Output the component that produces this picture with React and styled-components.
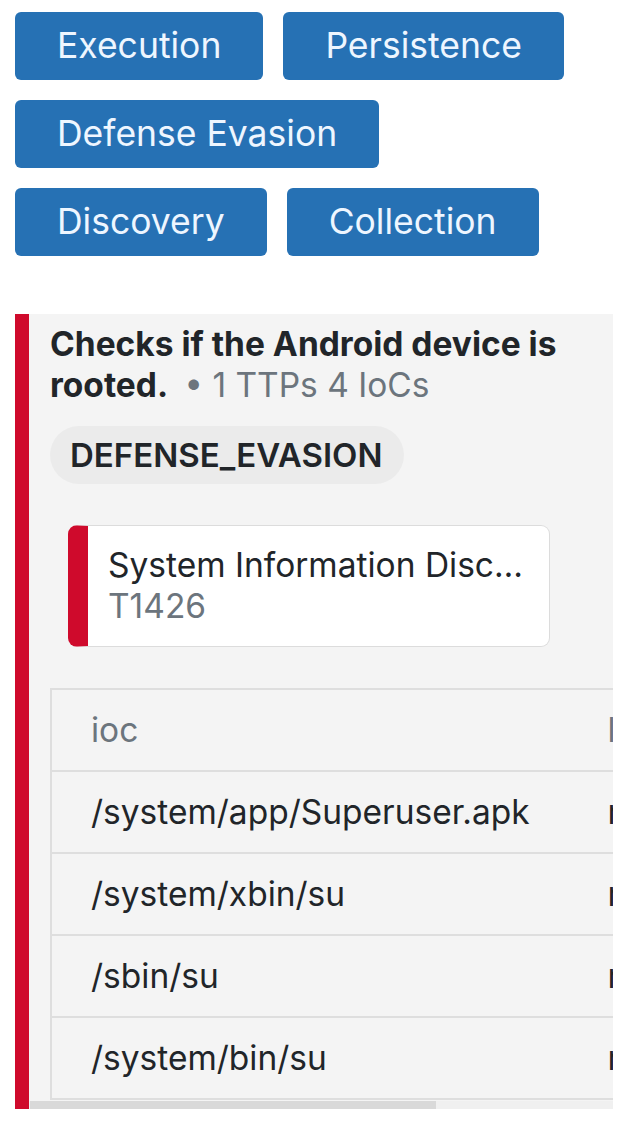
import React from 'react';
import styled, { createGlobalStyle } from 'styled-components';

const GlobalStyle = createGlobalStyle`
  body {
    margin: 0;
    background: #ffffff;
    font-family: Inter, "Noto Sans", "Liberation Sans", sans-serif;
    color: #212529;
  }
`;

const TacticBar = styled.div`
  display: flex;
  flex-wrap: wrap;
  gap: 20px;
  padding: 12px 15px 0;
`;

const TacticButton = styled.button`
  font-family: inherit;
  font-size: 35.5px;
  line-height: 44px;
  padding: 12px 42px;
  border: none;
  border-radius: 6px;
  background: #2671b4;
  color: #eef6ff;
`;

const Card = styled.section`
  display: flex;
  margin: 58px 27px 0 15px;
  border-left: 14px solid #cf0a2c;
  background: #f4f4f4;
`;

const CardBody = styled.div`
  flex: 1;
  min-width: 0;
  display: flex;
  flex-direction: column;
`;

const Viewport = styled.div`
  overflow: hidden;
  padding: 10px 0 1px 21px;
`;

const Title = styled.h3`
  margin: 0;
  padding-right: 21px;
  font-size: 33.5px;
  line-height: 41px;
  font-weight: 700;
  color: #212529;
`;

const Meta = styled.span`
  margin-left: 16px;
  font-weight: 400;
  color: #6c757d;
`;

const Chip = styled.div`
  display: inline-flex;
  align-items: center;
  height: 58px;
  margin-top: 20px;
  padding: 0 21px 0 20px;
  border-radius: 29px;
  background: #ebebeb;
  font-size: 33px;
  font-weight: 600;
  color: #212529;
`;

const TtpCard = styled.div`
  width: 482px;
  box-sizing: border-box;
  margin: 41px 0 0 18px;
  padding: 19px 20px;
  border: 1px solid #dcdcdc;
  border-left: 20px solid #cf0a2c;
  border-radius: 9px;
  background: #ffffff;
  font-size: 33.5px;
  line-height: 41px;
`;

const TtpName = styled.div`
  white-space: nowrap;
  overflow: hidden;
  text-overflow: ellipsis;
  color: #212529;
`;

const TtpId = styled.div`
  color: #6c757d;
`;

const IocTable = styled.table`
  margin-top: 41px;
  min-width: 798px;
  border-collapse: collapse;
  border: 2px solid #dedede;
  white-space: nowrap;
  font-size: 33.5px;
  line-height: 44px;
`;

const Cell = styled.td`
  padding: 18px 39px;
  border-bottom: 2px solid #dedede;
  text-align: left;
  font-weight: 400;
  color: ${(p) => (p.$head ? '#6c757d' : '#212529')};
`;

const ScrollTrack = styled.div`
  height: 8px;
  background: #f0f0f0;
`;

const ScrollThumb = styled.div`
  height: 100%;
  background: #d9d9d9;
  margin-left: 1px;
`;

const tactics = ['Execution', 'Persistence', 'Defense Evasion', 'Discovery', 'Collection'];

const iocs = [
  ['/system/app/Superuser.apk', 'rooting app'],
  ['/system/xbin/su', 'rooting binary'],
  ['/sbin/su', 'rooting binary'],
  ['/system/bin/su', 'rooting binary'],
];

const App = () => {
  const visible = 584;
  const content = 840;

  return (
    <>
      <GlobalStyle />
      <TacticBar>
        {tactics.map((t) => (
          <TacticButton key={t}>{t}</TacticButton>
        ))}
      </TacticBar>

      <Card>
        <CardBody>
          <Viewport>
            <Title>
              Checks if the Android device is rooted.
              <Meta>• 1 TTPs 4 IoCs</Meta>
            </Title>
            <Chip>DEFENSE_EVASION</Chip>
            <TtpCard>
              <TtpName>System Information Discovery</TtpName>
              <TtpId>T1426</TtpId>
            </TtpCard>
            <IocTable>
              <thead>
                <tr>
                  <Cell as="th" $head>ioc</Cell>
                  <Cell as="th" $head>location</Cell>
                </tr>
              </thead>
              <tbody>
                {iocs.map(([path, kind]) => (
                  <tr key={path}>
                    <Cell>{path}</Cell>
                    <Cell>{kind}</Cell>
                  </tr>
                ))}
              </tbody>
            </IocTable>
          </Viewport>
          <ScrollTrack>
            <ScrollThumb style={{ width: `${(visible / content) * 100}%` }} />
          </ScrollTrack>
        </CardBody>
      </Card>
    </>
  );
};

export default App;
